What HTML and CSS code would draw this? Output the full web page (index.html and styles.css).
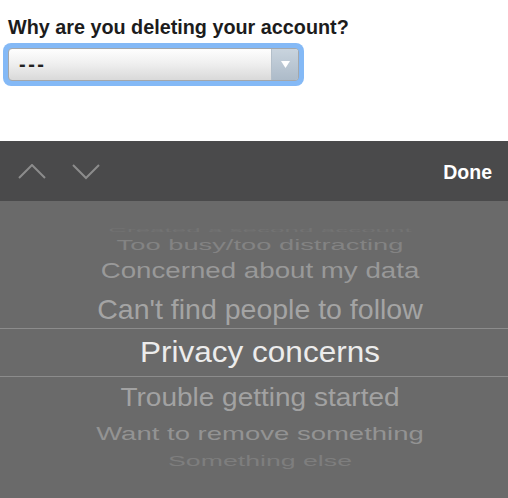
FILE: index.html
```html
<!DOCTYPE html>
<html lang="en">
<head>
<meta charset="utf-8">
<title>Delete account</title>
<link rel="stylesheet" href="styles.css">
</head>
<body>
<section class="question">
  <h1 class="question-title">Why are you deleting your account?</h1>
  <div class="focus-ring">
    <div class="select">
      <span class="select-value">---</span>
      <span class="select-arrow">
        <svg width="9" height="7" viewBox="0 0 9 7"><path d="M0 0 H9 L4.5 7 Z" fill="#ffffff"/></svg>
      </span>
    </div>
  </div>
</section>
<div class="toolbar">
  <div class="nav-arrows">
    <svg width="82" height="16" viewBox="0 0 82 16">
      <path d="M1 14 L14 1 L27 14" fill="none" stroke="#8c8c8c" stroke-width="2"/>
      <path d="M55 1 L68 14 L81 1" fill="none" stroke="#8c8c8c" stroke-width="2"/>
    </svg>
  </div>
  <span class="done">Done</span>
</div>
<div class="picker">
  <div class="row r-created"><span>Created a second account</span></div>
  <div class="row r-busy"><span>Too busy/too distracting</span></div>
  <div class="row r-concern"><span>Concerned about my data</span></div>
  <div class="row r-cant"><span>Can't find people to follow</span></div>
  <div class="row r-selected"><span>Privacy concerns</span></div>
  <div class="row r-trouble"><span>Trouble getting started</span></div>
  <div class="row r-want"><span>Want to remove something</span></div>
  <div class="row r-else"><span>Something else</span></div>
</div>
</body>
</html>
```

FILE: styles.css
```css
html, body {
  margin: 0;
  padding: 0;
  background: #ffffff;
  font-family: "Liberation Sans", Arial, sans-serif;
}

.question {
  height: 141px;
  box-sizing: border-box;
  padding: 15px 0 0 3px;
}

.question-title {
  margin: 0 0 4px 5px;
  font-size: 19.8px;
  line-height: 24px;
  font-weight: bold;
  color: #1c1c1c;
}

.focus-ring {
  width: 301px;
  height: 43px;
  box-sizing: border-box;
  padding: 5px;
  border-radius: 8px;
  background: #84b9f6;
}

.select {
  display: flex;
  height: 33px;
  box-sizing: border-box;
  border: 1px solid #a3a7ab;
  border-radius: 4px;
  overflow: hidden;
  background: linear-gradient(#fefefe, #f0f0f0 45%, #d9d9d9);
}

.select-value {
  flex: 1;
  padding-left: 10px;
  font-size: 20px;
  font-weight: bold;
  line-height: 31px;
  letter-spacing: 2.5px;
  color: #222222;
}

.select-arrow {
  width: 26px;
  display: flex;
  align-items: center;
  justify-content: center;
  border-left: 1px solid #b3bfca;
  background: linear-gradient(#c9d4de, #adbbc9);
}

.toolbar {
  height: 60px;
  display: flex;
  align-items: center;
  justify-content: space-between;
  padding: 0 16px 0 18px;
  background: #4a4a4b;
}

.nav-arrows svg {
  display: block;
  margin-top: 2px;
}

.done {
  font-size: 19.5px;
  font-weight: bold;
  color: #ffffff;
  margin-top: 2px;
}

.picker {
  height: 297px;
  box-sizing: border-box;
  padding-top: 22px;
  overflow: hidden;
  background: #6a6a6a;
}

.row {
  display: flex;
  align-items: center;
  justify-content: center;
  padding-left: 12px;
  white-space: nowrap;
}

.row span {
  display: inline-block;
  line-height: 1;
}

.r-created { height: 14px; font-size: 26px; color: #737373; }
.r-created span { transform: scaleY(0.22); }

.r-busy { height: 15px; font-size: 27.3px; color: #838383; }
.r-busy span { transform: scaleY(0.52); }

.r-concern { height: 38px; font-size: 27.7px; color: #999999; }
.r-concern span { transform: scaleY(0.8); }

.r-cant { height: 38px; font-size: 28.5px; color: #a4a4a4; }

.r-selected {
  height: 49px;
  box-sizing: border-box;
  border-top: 1px solid #8c8c8c;
  border-bottom: 1px solid #8c8c8c;
  font-size: 31.5px;
  color: #ececec;
}
.r-selected span { transform: scaleY(0.95); }

.r-trouble { height: 40px; font-size: 28px; color: #a2a2a2; }
.r-trouble span { transform: scaleY(0.95); }

.r-want { height: 34px; font-size: 27.5px; color: #939393; }
.r-want span { transform: scaleY(0.7); }

.r-else { height: 20px; font-size: 26.7px; color: #7e7e7e; }
.r-else span { transform: scaleY(0.52); }
```
